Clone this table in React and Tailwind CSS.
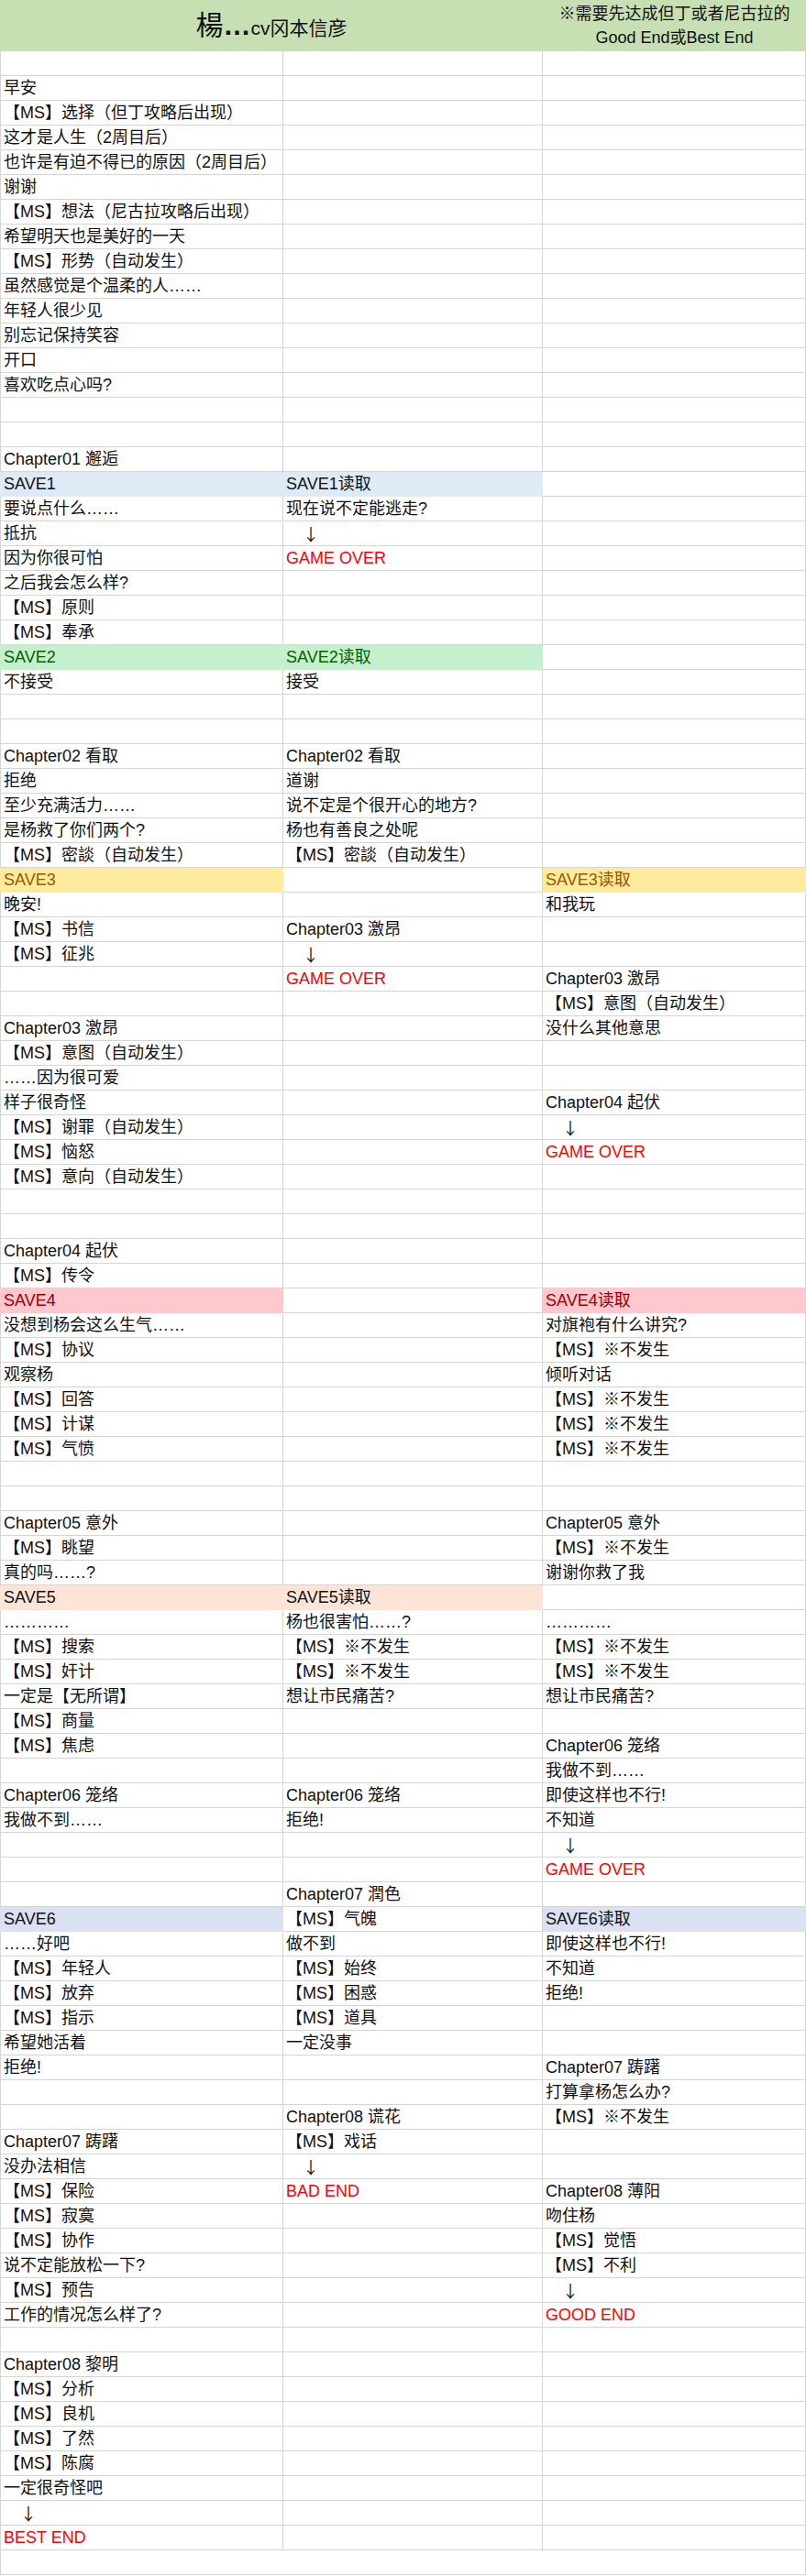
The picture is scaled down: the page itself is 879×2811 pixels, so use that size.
import React from "react";

const A = { arrow: true };

const FILL = {
  b1: "bg-[#ddebf7] border-[#ddebf7] text-[#111111]",
  g: "bg-[#c6efce] border-[#c6efce] text-[#006100]",
  y: "bg-[#ffeb9c] border-[#ffeb9c] text-[#9c5700]",
  p: "bg-[#ffc7ce] border-[#ffc7ce] text-[#9c0006]",
  o: "bg-[#fce4d6] border-[#fce4d6] text-[#111111]",
  s: "bg-[#d9e1f2] border-[#d9e1f2] text-[#111111]",
};

const rows = [
  [],
  ["早安"],
  ["【MS】选择（但丁攻略后出现）"],
  ["这才是人生（2周目后）"],
  ["也许是有迫不得已的原因（2周目后）"],
  ["谢谢"],
  ["【MS】想法（尼古拉攻略后出现）"],
  ["希望明天也是美好的一天"],
  ["【MS】形势（自动发生）"],
  ["虽然感觉是个温柔的人……"],
  ["年轻人很少见"],
  ["别忘记保持笑容"],
  ["开口"],
  ["喜欢吃点心吗?"],
  [],
  [],
  ["Chapter01 邂逅"],
  [{ t: "SAVE1", f: "b1" }, { t: "SAVE1读取", f: "b1" }],
  ["要说点什么……", "现在说不定能逃走?"],
  ["抵抗", A],
  ["因为你很可怕", "!GAME OVER"],
  ["之后我会怎么样?"],
  ["【MS】原则"],
  ["【MS】奉承"],
  [{ t: "SAVE2", f: "g" }, { t: "SAVE2读取", f: "g" }],
  ["不接受", "接受"],
  [],
  [],
  ["Chapter02 看取", "Chapter02 看取"],
  ["拒绝", "道谢"],
  ["至少充满活力……", "说不定是个很开心的地方?"],
  ["是杨救了你们两个?", "杨也有善良之处呢"],
  ["【MS】密談（自动发生）", "【MS】密談（自动发生）"],
  [{ t: "SAVE3", f: "y" }, "", { t: "SAVE3读取", f: "y" }],
  ["晚安!", "", "和我玩"],
  ["【MS】书信", "Chapter03 激昂"],
  ["【MS】征兆", A],
  ["", "!GAME OVER", "Chapter03 激昂"],
  ["", "", "【MS】意图（自动发生）"],
  ["Chapter03 激昂", "", "没什么其他意思"],
  ["【MS】意图（自动发生）"],
  ["……因为很可爱"],
  ["样子很奇怪", "", "Chapter04 起伏"],
  ["【MS】谢罪（自动发生）", "", A],
  ["【MS】恼怒", "", "!GAME OVER"],
  ["【MS】意向（自动发生）"],
  [],
  [],
  ["Chapter04 起伏"],
  ["【MS】传令"],
  [{ t: "SAVE4", f: "p" }, "", { t: "SAVE4读取", f: "p" }],
  ["没想到杨会这么生气……", "", "对旗袍有什么讲究?"],
  ["【MS】协议", "", "【MS】※不发生"],
  ["观察杨", "", "倾听对话"],
  ["【MS】回答", "", "【MS】※不发生"],
  ["【MS】计谋", "", "【MS】※不发生"],
  ["【MS】气愤", "", "【MS】※不发生"],
  [],
  [],
  ["Chapter05 意外", "", "Chapter05 意外"],
  ["【MS】眺望", "", "【MS】※不发生"],
  ["真的吗……?", "", "谢谢你救了我"],
  [{ t: "SAVE5", f: "o" }, { t: "SAVE5读取", f: "o" }],
  ["…………", "杨也很害怕……?", "…………"],
  ["【MS】搜索", "【MS】※不发生", "【MS】※不发生"],
  ["【MS】奸计", "【MS】※不发生", "【MS】※不发生"],
  ["一定是【无所谓】", "想让市民痛苦?", "想让市民痛苦?"],
  ["【MS】商量"],
  ["【MS】焦虑", "", "Chapter06 笼络"],
  ["", "", "我做不到……"],
  ["Chapter06 笼络", "Chapter06 笼络", "即使这样也不行!"],
  ["我做不到……", "拒绝!", "不知道"],
  ["", "", A],
  ["", "", "!GAME OVER"],
  ["", "Chapter07 潤色"],
  [{ t: "SAVE6", f: "s" }, "【MS】气魄", { t: "SAVE6读取", f: "s" }],
  ["……好吧", "做不到", "即使这样也不行!"],
  ["【MS】年轻人", "【MS】始终", "不知道"],
  ["【MS】放弃", "【MS】困惑", "拒绝!"],
  ["【MS】指示", "【MS】道具"],
  ["希望她活着", "一定没事"],
  ["拒绝!", "", "Chapter07 踌躇"],
  ["", "", "打算拿杨怎么办?"],
  ["", "Chapter08 谎花", "【MS】※不发生"],
  ["Chapter07 踌躇", "【MS】戏话"],
  ["没办法相信", A],
  ["【MS】保险", "!BAD END", "Chapter08 薄阳"],
  ["【MS】寂寞", "", "吻住杨"],
  ["【MS】协作", "", "【MS】觉悟"],
  ["说不定能放松一下?", "", "【MS】不利"],
  ["【MS】预告", "", A],
  ["工作的情况怎么样了?", "", "!GOOD END"],
  [],
  ["Chapter08 黎明"],
  ["【MS】分析"],
  ["【MS】良机"],
  ["【MS】了然"],
  ["【MS】陈腐"],
  ["一定很奇怪吧"],
  [A],
  ["!BEST END"],
];

const WIDTHS = ["w-[309px] border-l", "w-[283px]", "w-[287px]"];

function Cell({ data, col }) {
  let cls = "border-[#d4d4d4] text-[#111111]";
  let content = null;
  if (data && typeof data === "object" && data.arrow) {
    content = <span className="font-['Noto_Sans_CJK_SC',sans-serif]">{"\u3000↓"}</span>;
  } else if (data && typeof data === "object") {
    cls = FILL[data.f];
    content = data.t;
  } else if (typeof data === "string" && data.startsWith("!")) {
    cls = "border-[#d4d4d4] text-[#ff0000]";
    content = data.slice(1);
  } else if (data) {
    content = data;
  }
  return (
    <div
      className={`${WIDTHS[col]} ${cls} h-[27px] shrink-0 border-r border-b pl-[3px] leading-[26px] whitespace-nowrap overflow-hidden`}
    >
      {content}
    </div>
  );
}

export default function App() {
  return (
    <div className="w-[879px] bg-white font-['Liberation_Sans','Noto_Sans_CJK_SC',sans-serif] text-[18px] text-[#111111]">
      <div className="flex h-[56px] bg-[#c6e0b4]">
        <div className="w-[592px] flex items-center justify-center">
          <div className="flex items-baseline">
            <span className="text-[30px] leading-none">楊</span>
            <span className="text-[30px] font-bold leading-none">…</span>
            <span className="text-[21px] leading-none">cv冈本信彦</span>
          </div>
        </div>
        <div className="w-[287px] flex flex-col items-center justify-center leading-[26px] text-[18px]">
          <div>※需要先达成但丁或者尼古拉的</div>
          <div>Good End或Best End</div>
        </div>
      </div>
      {rows.map((r, i) => (
        <div key={i} className="flex h-[27px]">
          <Cell data={r[0]} col={0} />
          <Cell data={r[1]} col={1} />
          <Cell data={r[2]} col={2} />
        </div>
      ))}
      <div className="h-[27px] border-x border-b border-[#d4d4d4]" />
    </div>
  );
}
